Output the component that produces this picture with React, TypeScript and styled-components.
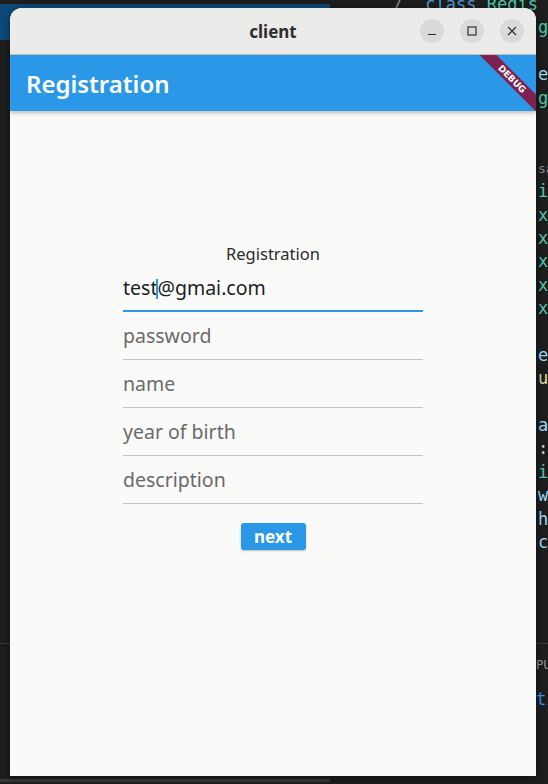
import styled, { createGlobalStyle } from 'styled-components';

const GlobalStyle = createGlobalStyle`
  html, body {
    margin: 0;
    padding: 0;
    background: #1e1e1e;
  }
  * {
    box-sizing: border-box;
  }
`;

interface CodeLine {
  text: string;
  color: string;
  small?: boolean;
}

const codeLines: CodeLine[] = [
  { text: 'g', color: '#4ec9b0' },
  { text: '', color: '' },
  { text: 'e', color: '#9cdcfe' },
  { text: 'g', color: '#4ec9b0' },
  { text: '', color: '' },
  { text: '', color: '' },
  { text: 'sa', color: '#8a8a8a', small: true },
  { text: 'i', color: '#4ec9b0' },
  { text: 'x', color: '#4ec9b0' },
  { text: 'x', color: '#4ec9b0' },
  { text: 'x', color: '#4ec9b0' },
  { text: 'x', color: '#4ec9b0' },
  { text: 'x', color: '#4ec9b0' },
  { text: '', color: '' },
  { text: 'e', color: '#9cdcfe' },
  { text: 'u', color: '#dcdcaa' },
  { text: '', color: '' },
  { text: 'a', color: '#9cdcfe' },
  { text: ':', color: '#cccccc' },
  { text: 'i', color: '#4ec9b0' },
  { text: 'w', color: '#9cdcfe' },
  { text: 'h', color: '#9cdcfe' },
  { text: 'c', color: '#9cdcfe' },
];

const fields = [
  { value: 'test@gmai.com', placeholder: 'email', focused: true },
  { value: '', placeholder: 'password', focused: false },
  { value: '', placeholder: 'name', focused: false },
  { value: '', placeholder: 'year of birth', focused: false },
  { value: '', placeholder: 'description', focused: false },
];

const App = () => {
  return (
    <Desktop>
      <GlobalStyle />
      <Editor>
        <FirstLine>
          <Slash>/</Slash>
          <Keyword>class</Keyword> <TypeName>Regis</TypeName>
        </FirstLine>
        {codeLines.map((line, i) => (
          <Line key={i} $color={line.color} $small={line.small}>
            {line.text}
          </Line>
        ))}
        <PanelTabs>PU</PanelTabs>
        <PanelLine>ti</PanelLine>
      </Editor>

      <Window>
        <TitleBar>
          <WindowTitle>client</WindowTitle>
          <Controls>
            <CtrlBtn>
              <svg width="10" height="10" viewBox="0 0 10 10">
                <path d="M1 8.5h8" stroke="#2e2e2e" strokeWidth="1.2" />
              </svg>
            </CtrlBtn>
            <CtrlBtn>
              <svg width="10" height="10" viewBox="0 0 10 10">
                <rect x="1" y="1" width="8" height="8" fill="none" stroke="#2e2e2e" strokeWidth="1.2" />
              </svg>
            </CtrlBtn>
            <CtrlBtn>
              <svg width="10" height="10" viewBox="0 0 10 10">
                <path d="M1 1l8 8M9 1l-8 8" stroke="#2e2e2e" strokeWidth="1.2" />
              </svg>
            </CtrlBtn>
          </Controls>
        </TitleBar>

        <Screen>
          <AppBar>
            <AppBarTitle>Registration</AppBarTitle>
          </AppBar>
          <Body>
            <Form>
              <FormTitle>Registration</FormTitle>
              {fields.map((f) => (
                <Field key={f.placeholder} $focused={f.focused}>
                  {f.value ? (
                    <FieldValue>
                      test<Caret />@gmai.com
                    </FieldValue>
                  ) : (
                    <Placeholder>{f.placeholder}</Placeholder>
                  )}
                </Field>
              ))}
              <NextBtn>next</NextBtn>
            </Form>
          </Body>
          <DebugBanner>DEBUG</DebugBanner>
        </Screen>
      </Window>
    </Desktop>
  );
};

const Desktop = styled.div`
  position: relative;
  width: 548px;
  height: 784px;
  overflow: hidden;
  background:
    linear-gradient(#0d4a79, #0d4a79) 0 4px / 330px 36px no-repeat,
    linear-gradient(#3a3a3a, #3a3a3a) 0 779px / 330px 3px no-repeat,
    #1e1e1e;
`;

const Editor = styled.div`
  margin-top: -7px;
  font-family: 'DejaVu Sans Mono', 'Liberation Mono', monospace;
  font-size: 17px;
`;

const FirstLine = styled.div`
  height: 23.4px;
  line-height: 23.4px;
  padding-left: 393px;
  white-space: pre;
`;

const Slash = styled.span`
  color: #8a8a8a;
  margin-right: 22px;
`;

const Keyword = styled.span`
  color: #569cd6;
`;

const TypeName = styled.span`
  color: #4ec9b0;
`;

const Line = styled.div<{ $color: string; $small?: boolean }>`
  height: 23.4px;
  line-height: 23.4px;
  padding-left: 538px;
  color: ${(p) => p.$color};
  font-size: ${(p) => (p.$small ? '13px' : '17px')};
  white-space: pre;
`;

const PanelTabs = styled.div`
  margin-top: 89px;
  border-top: 1px solid #3c3c3c;
  padding: 14px 0 0 536px;
  height: 46px;
  font-family: 'DejaVu Sans', sans-serif;
  font-size: 12px;
  color: #9a9a9a;
`;

const PanelLine = styled.div`
  padding-left: 536px;
  color: #3794ff;
`;

const Window = styled.div`
  position: absolute;
  left: 10px;
  top: 8px;
  width: 526px;
  height: 768px;
  display: flex;
  flex-direction: column;
  border-radius: 12px 12px 0 0;
  overflow: hidden;
  background: #fafaf8;
  box-shadow: 0 2px 10px rgba(0, 0, 0, 0.5);
`;

const TitleBar = styled.div`
  position: relative;
  height: 47px;
  flex-shrink: 0;
  display: flex;
  align-items: center;
  justify-content: center;
  background: #ebebea;
  border-bottom: 1px solid #bdbdbd;
`;

const WindowTitle = styled.span`
  font-family: 'Noto Sans', sans-serif;
  font-weight: 700;
  font-size: 17px;
  color: #2e2e2e;
`;

const Controls = styled.div`
  position: absolute;
  right: 12px;
  top: 11px;
  display: flex;
  gap: 16px;
`;

const CtrlBtn = styled.div`
  width: 24px;
  height: 24px;
  border-radius: 50%;
  background: #dadada;
  display: flex;
  align-items: center;
  justify-content: center;
`;

const Screen = styled.div`
  position: relative;
  flex: 1;
  display: flex;
  flex-direction: column;
  overflow: hidden;
`;

const AppBar = styled.div`
  height: 56px;
  flex-shrink: 0;
  display: flex;
  align-items: center;
  padding-left: 16px;
  background: #2a98e6;
  box-shadow: 0 2px 4px rgba(0, 0, 0, 0.25);
  z-index: 1;
`;

const AppBarTitle = styled.h1`
  margin: 0;
  font-family: 'Noto Sans', sans-serif;
  font-weight: 600;
  font-size: 24px;
  color: #ffffff;
`;

const Body = styled.div`
  flex: 1;
  background: #fafaf8;
  display: flex;
  justify-content: center;
  padding-top: 133px;
`;

const Form = styled.div`
  width: 300px;
  display: flex;
  flex-direction: column;
  align-items: center;
  font-family: 'Noto Sans', sans-serif;
`;

const FormTitle = styled.div`
  height: 20px;
  line-height: 20px;
  font-size: 16.5px;
  color: #2b2b2b;
`;

const Field = styled.div<{ $focused: boolean }>`
  width: 100%;
  height: 48px;
  padding-top: 12px;
  font-size: 19.5px;
  line-height: 24px;
  border-bottom: ${(p) => (p.$focused ? '2px solid #2a98e6' : '1.5px solid #c4c4c2')};
`;

const FieldValue = styled.span`
  color: #1e1e1e;
`;

const Caret = styled.span`
  display: inline-block;
  width: 2px;
  height: 20px;
  margin: 0 -1px;
  vertical-align: -4px;
  background: #2a98e6;
`;

const Placeholder = styled.span`
  color: #6a6a6a;
`;

const NextBtn = styled.button`
  margin-top: 19px;
  width: 65px;
  height: 27px;
  padding: 0;
  border: none;
  border-radius: 3px;
  background: #2a98e6;
  color: #ffffff;
  font-family: 'Noto Sans', sans-serif;
  font-weight: 700;
  font-size: 17px;
  line-height: 27px;
  box-shadow: 0 1px 2px rgba(0, 0, 0, 0.25);
  cursor: pointer;
`;

const DebugBanner = styled.div`
  position: absolute;
  left: 442px;
  top: 18px;
  width: 120px;
  height: 12px;
  transform: rotate(45deg);
  background: #7f2150;
  color: #ffffff;
  font-family: 'DejaVu Sans', sans-serif;
  font-weight: 700;
  font-size: 9px;
  line-height: 12px;
  text-align: center;
  z-index: 2;
`;

export default App;
